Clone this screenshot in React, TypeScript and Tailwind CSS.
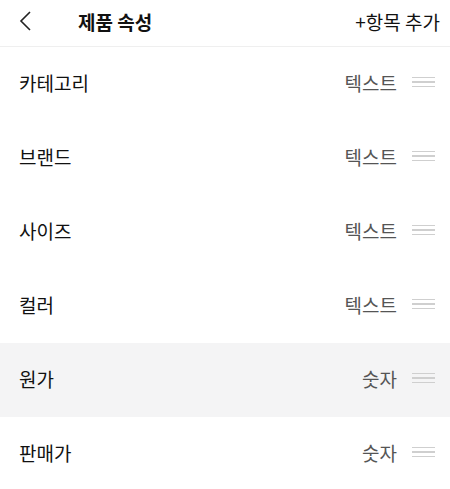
const rows = [
  { name: "카테고리", type: "텍스트" },
  { name: "브랜드", type: "텍스트" },
  { name: "사이즈", type: "텍스트" },
  { name: "컬러", type: "텍스트" },
  { name: "원가", type: "숫자", active: true },
  { name: "판매가", type: "숫자" },
];

function Handle() {
  return (
    <div className="flex w-[23px] flex-col gap-[3px]">
      <span className="h-[1.5px] bg-[#cfcfcf]" />
      <span className="h-[1.5px] bg-[#cfcfcf]" />
      <span className="h-[1.5px] bg-[#cfcfcf]" />
    </div>
  );
}

export default function App() {
  return (
    <div
      className="h-[489px] w-[450px] overflow-hidden bg-white text-[#111]"
      style={{ fontFamily: '"Noto Sans CJK KR", "Noto Sans", sans-serif' }}
    >
      <header className="flex h-[47px] items-center border-b border-[#efefef] pb-[4px] pl-[18px] pr-[10px]">
        <svg width="16" height="22" viewBox="0 0 16 22" fill="none" stroke="#222" strokeWidth="1.6">
          <path d="M12 2 L3 11 L12 20" />
        </svg>
        <h1 className="ml-[44px] text-[19px] font-bold leading-none">제품 속성</h1>
        <button className="ml-auto text-[19px] leading-none text-[#111]">+항목 추가</button>
      </header>
      {rows.map((r) => (
        <div
          key={r.name}
          className={`flex h-[74px] items-center pb-[4px] pl-[19px] pr-[15px] ${r.active ? "bg-[#f4f4f5]" : ""}`}
        >
          <span className="text-[19px] leading-none">{r.name}</span>
          <span className="ml-auto mr-[15px] text-[19px] leading-none text-[#555]">{r.type}</span>
          <Handle />
        </div>
      ))}
    </div>
  );
}
